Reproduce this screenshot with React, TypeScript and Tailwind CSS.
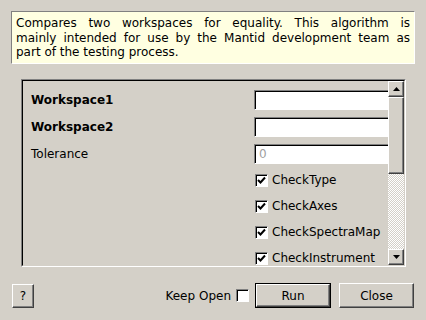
import React from "react";

// classic bevels
const raised =
  "border border-t-white border-l-white border-b-[#404040] border-r-[#404040] shadow-[inset_-1px_-1px_0_#808080] bg-[#d4d0c8]";

function Arrow({ up }: { up?: boolean }) {
  return (
    <svg width="7" height="4" viewBox="0 0 7 4">
      <path d={up ? "M3.5 0 L7 4 L0 4 Z" : "M0 0 L7 0 L3.5 4 Z"} fill="#000" />
    </svg>
  );
}

function CheckBox({ checked }: { checked?: boolean }) {
  return (
    <div className="w-[13px] h-[13px] shrink-0 bg-white border border-t-[#808080] border-l-[#808080] border-b-white border-r-white shadow-[inset_1px_1px_0_#000] flex items-center justify-center">
      {checked && (
        <svg width="9" height="9" viewBox="0 0 9 9">
          <path d="M1 4 L3.5 6.5 L8 1.5" stroke="#000" strokeWidth="2" fill="none" />
        </svg>
      )}
    </div>
  );
}

function TextInput({ placeholder }: { placeholder?: string }) {
  return (
    <div className="w-[150px] h-[20px] shrink-0 bg-white border border-t-[#808080] border-l-[#808080] border-b-white border-r-white shadow-[inset_1px_1px_0_#000] pl-[4px] flex items-center text-[#a0a0a0]">
      {placeholder}
    </div>
  );
}

const checks = ["CheckType", "CheckAxes", "CheckSpectraMap", "CheckInstrument"];

export default function App() {
  return (
    <div className="w-[426px] h-[320px] bg-[#d4d0c8] font-['DejaVu_Sans',sans-serif] text-[12px] text-black flex flex-col pt-[11px] overflow-hidden">
      {/* Description */}
      <div className="mx-[11px] h-[53px] bg-[#ffffe1] border border-t-[#808080] border-l-[#808080] border-b-white border-r-white px-[4px] pt-[4px] leading-[14.5px]">
        <div className="text-justify [text-align-last:justify]">
          Compares two workspaces for equality. This algorithm is
        </div>
        <div className="text-justify [text-align-last:justify]">
          mainly intended for use by the Mantid development team as
        </div>
        <div>part of the testing process.</div>
      </div>

      {/* Properties frame */}
      <div className="mt-[15px] ml-[21px] w-[385px] h-[188px] border border-t-[#808080] border-l-[#808080] border-b-white border-r-white">
        <div className="w-full h-full border border-t-black border-l-black border-b-[#d4d0c8] border-r-[#d4d0c8] flex">
          <div className="flex-1 overflow-hidden pt-[9px] pl-[8px]">
            <div className="grid grid-cols-[223px_1fr] gap-y-[7px]">
              <div className="h-[20px] flex items-center font-bold">Workspace1</div>
              <TextInput />
              <div className="h-[20px] flex items-center font-bold">Workspace2</div>
              <TextInput />
              <div className="h-[20px] flex items-center">Tolerance</div>
              <TextInput placeholder="0" />
            </div>
            <div className="flex flex-col gap-y-[6px] mt-[6px] ml-[224px]">
              {checks.map((c) => (
                <div key={c} className="h-[20px] flex items-center gap-[4px] whitespace-nowrap">
                  <CheckBox checked />
                  <span>{c}</span>
                </div>
              ))}
            </div>
          </div>

          {/* Scrollbar */}
          <div className="w-[16px] flex flex-col">
            <div className={`${raised} h-[16px] flex items-center justify-center`}>
              <Arrow up />
            </div>
            <div className={`${raised} h-[77px]`} />
            <div className="flex-1 bg-[repeating-conic-gradient(#d4d0c8_0_25%,#fff_0_50%)] bg-[length:2px_2px]" />
            <div className={`${raised} h-[16px] flex items-center justify-center`}>
              <Arrow />
            </div>
          </div>
        </div>
      </div>

      {/* Buttons */}
      <div className="mt-[16px] px-[12px] flex items-center">
        <div className={`${raised} w-[22px] h-[24px] flex items-center justify-center`}>?</div>
        <div className="flex-1" />
        <span>Keep Open</span>
        <div className="ml-[5px]">
          <CheckBox />
        </div>
        <div className="ml-[6px] w-[76px] h-[25px] border border-black">
          <div className={`${raised} w-full h-full flex items-center justify-center`}>Run</div>
        </div>
        <div className={`${raised} ml-[8px] w-[75px] h-[25px] flex items-center justify-center`}>
          Close
        </div>
      </div>
    </div>
  );
}
